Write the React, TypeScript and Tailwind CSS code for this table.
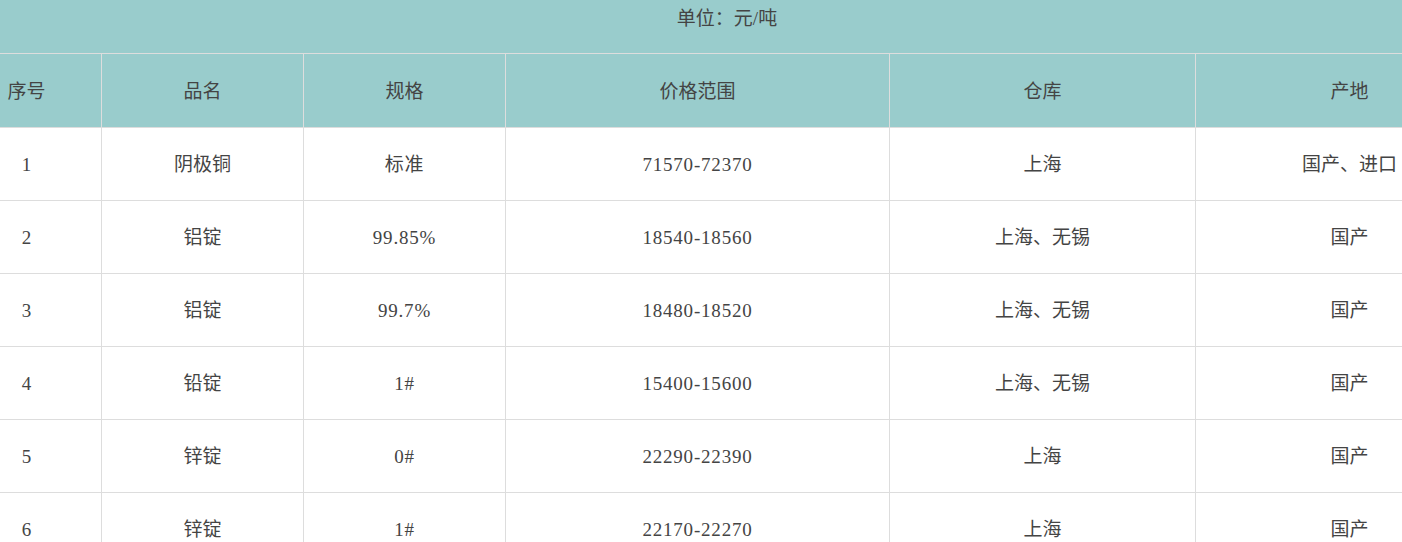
import React from 'react';

const rows = [
    { id: 1, name: '阴极铜', spec: '标准', price: '71570-72370', store: '上海', origin: '国产、进口' },
    { id: 2, name: '铝锭', spec: '99.85%', price: '18540-18560', store: '上海、无锡', origin: '国产' },
    { id: 3, name: '铝锭', spec: '99.7%', price: '18480-18520', store: '上海、无锡', origin: '国产' },
    { id: 4, name: '铅锭', spec: '1#', price: '15400-15600', store: '上海、无锡', origin: '国产' },
    { id: 5, name: '锌锭', spec: '0#', price: '22290-22390', store: '上海', origin: '国产' },
    { id: 6, name: '锌锭', spec: '1#', price: '22170-22270', store: '上海', origin: '国产' },
];

const headers = ['序号', '品名', '规格', '价格范围', '仓库', '产地'];

export default function App() {
    return (
        <div
            className="w-[1402px] h-[542px] overflow-hidden bg-white text-[#444] text-[19px]"
            style={{ fontFamily: '"Liberation Serif", "Noto Sans CJK SC", serif' }}
        >
            {/* table is wider than the window, scrolled a bit to the right */}
            <div className="w-[1552px] -ml-[49px]">
                <div className="h-[54px] leading-[38px] bg-[#99cccc] text-center border-b border-[#dddddd]">
                    单位：元/吨
                </div>
                <table className="w-[1552px] table-fixed border-collapse text-center">
                    <colgroup>
                        <col className="w-[150px]" />
                        <col className="w-[202px]" />
                        <col className="w-[202px]" />
                        <col className="w-[384px]" />
                        <col className="w-[306px]" />
                        <col className="w-[308px]" />
                    </colgroup>
                    <thead>
                        <tr className="h-[73px] bg-[#99cccc]">
                            {headers.map(h => (
                                <th key={h} className="font-normal border border-t-0 border-[#dddddd] p-0 pt-[4px]">{h}</th>
                            ))}
                        </tr>
                    </thead>
                    <tbody>
                        {rows.map(r => (
                            <tr key={r.id} className="h-[73px]">
                                <td className="border border-[#dddddd] p-0 pt-[4px]">{r.id}</td>
                                <td className="border border-[#dddddd] p-0 pt-[4px]">{r.name}</td>
                                <td className="border border-[#dddddd] p-0 pt-[4px] tracking-[0.8px]">{r.spec}</td>
                                <td className="border border-[#dddddd] p-0 pt-[4px] tracking-[0.8px]">{r.price}</td>
                                <td className="border border-[#dddddd] p-0 pt-[4px]">{r.store}</td>
                                <td className="border border-[#dddddd] p-0 pt-[4px]">{r.origin}</td>
                            </tr>
                        ))}
                    </tbody>
                </table>
            </div>
        </div>
    );
}
